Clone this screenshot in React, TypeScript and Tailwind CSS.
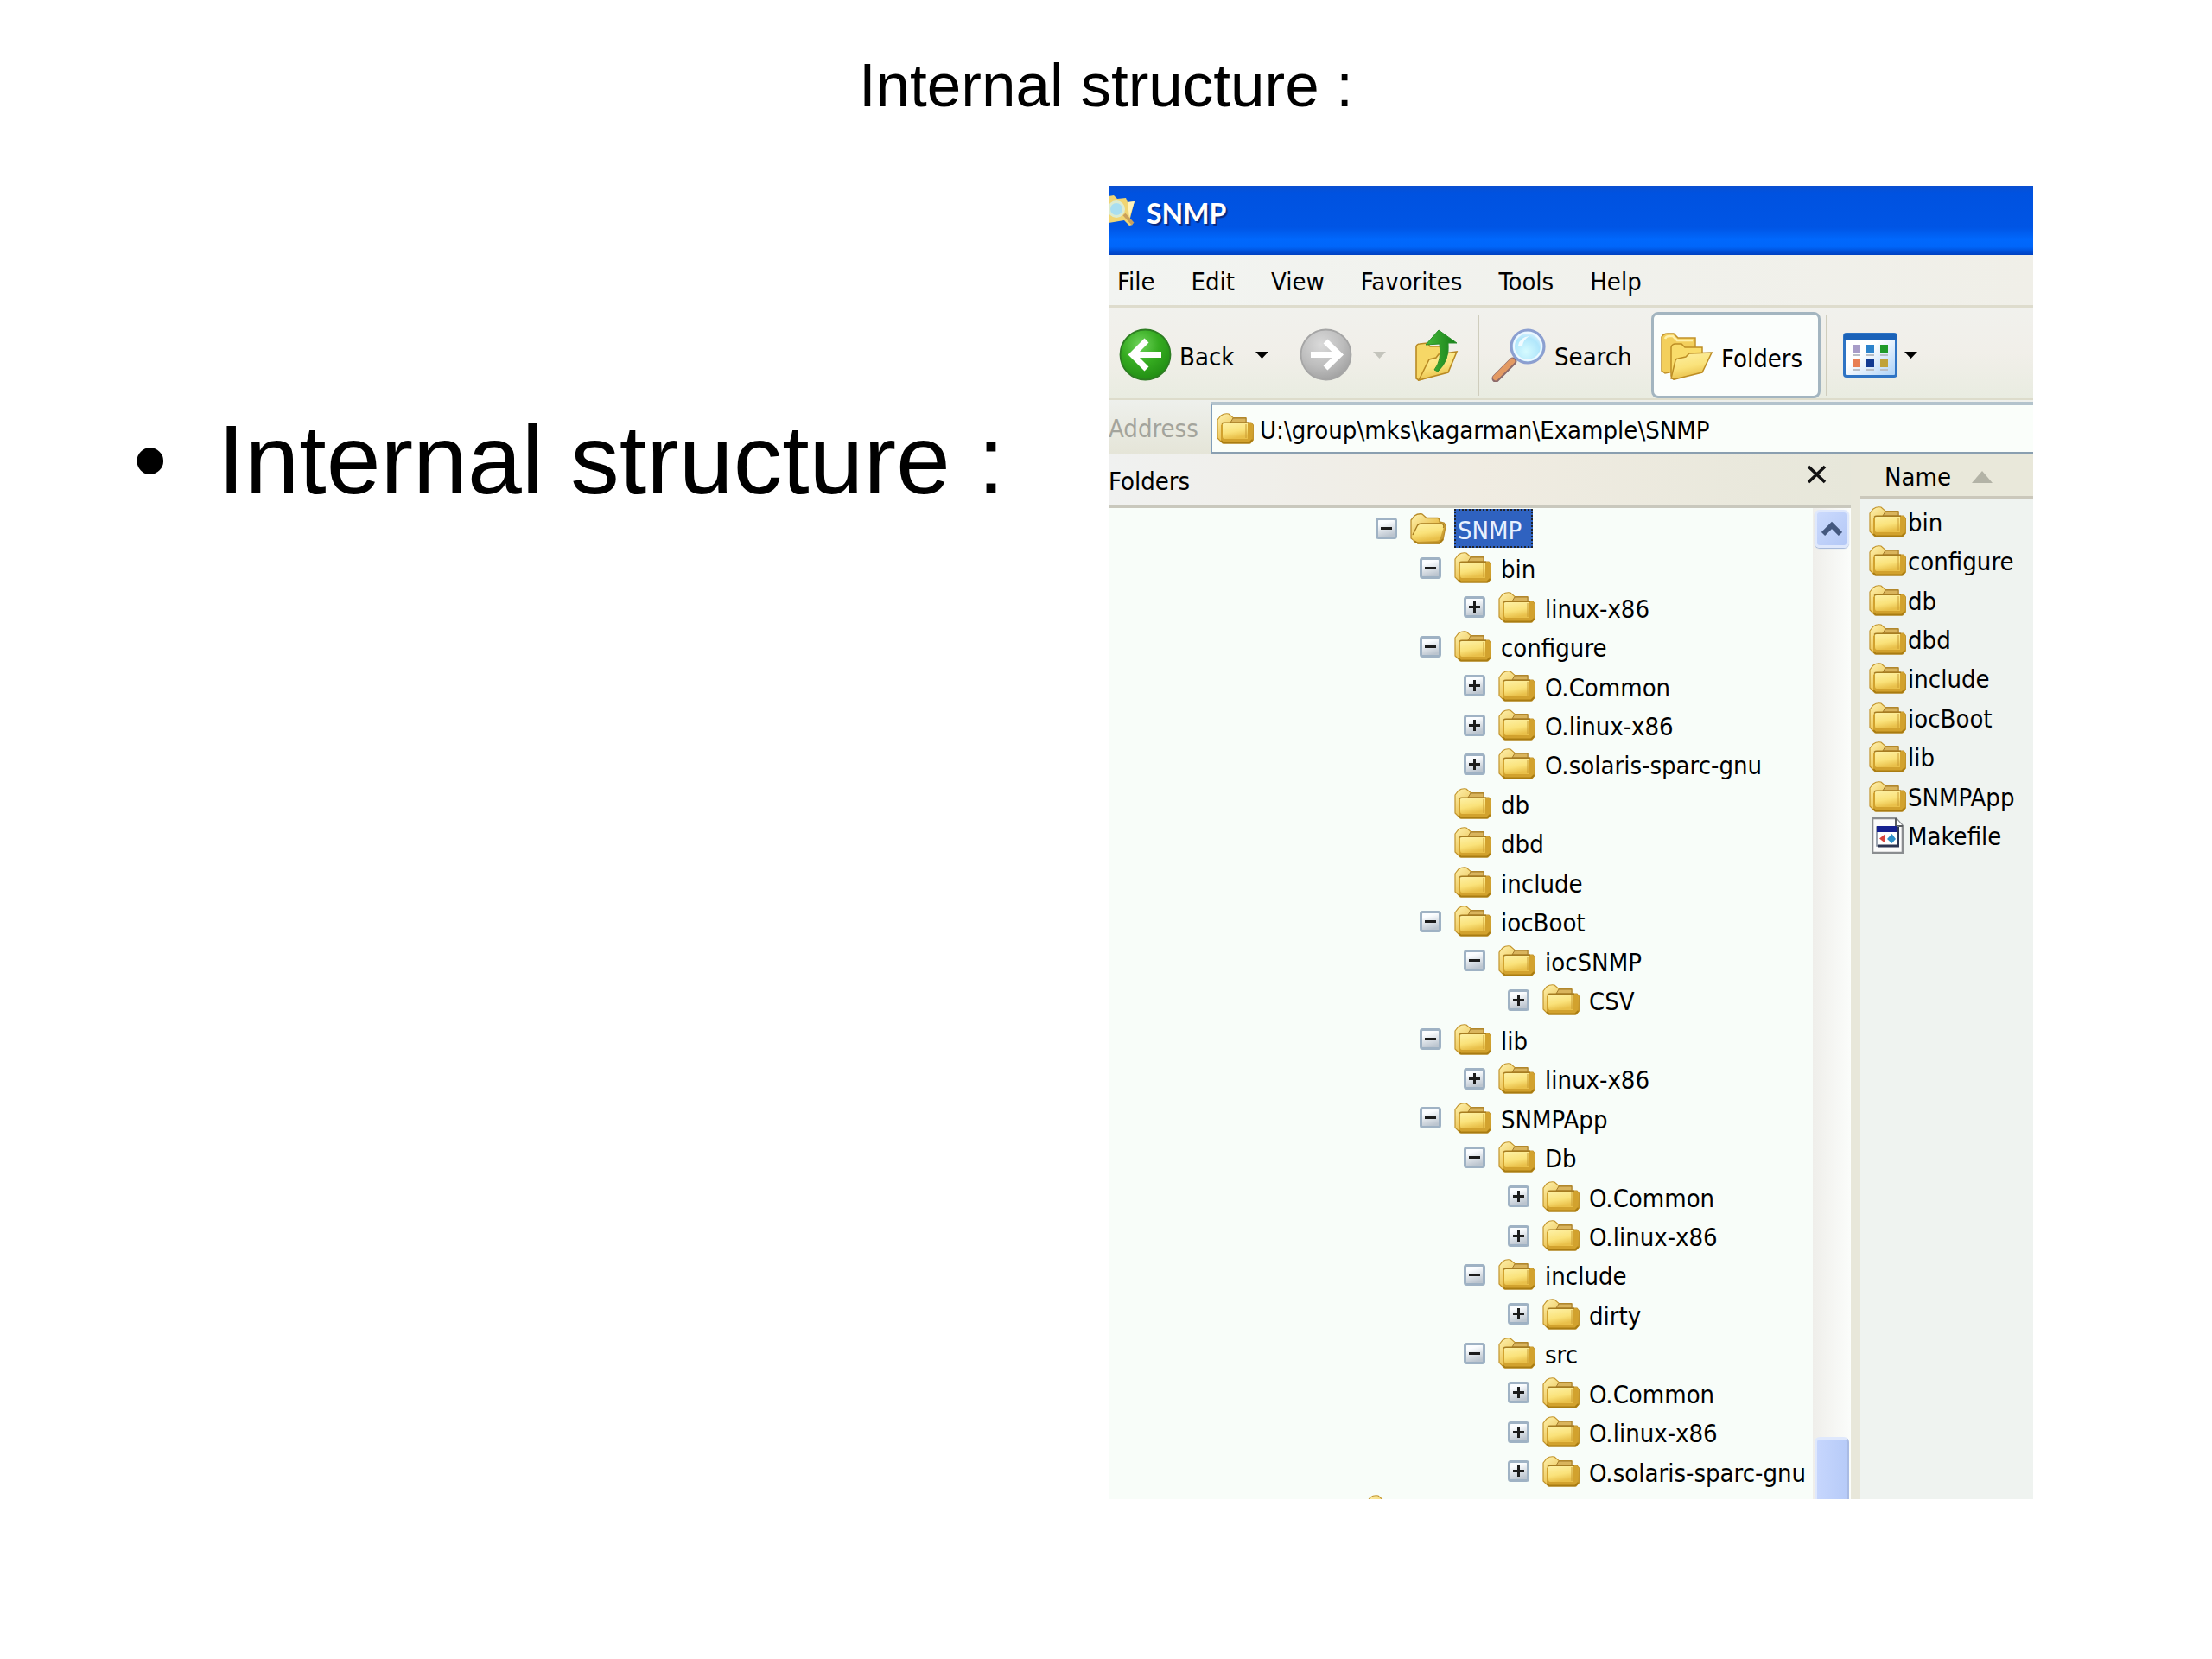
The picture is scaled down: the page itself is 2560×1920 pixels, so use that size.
import React from "react";

type Toggle = "open" | "closed" | null;
type Node = { label: string; level: 0 | 1 | 2 | 3; toggle: Toggle };

const TREE: Node[] = [
  { label: "SNMP", level: 0, toggle: "open" },
  { label: "bin", level: 1, toggle: "open" },
  { label: "linux-x86", level: 2, toggle: "closed" },
  { label: "configure", level: 1, toggle: "open" },
  { label: "O.Common", level: 2, toggle: "closed" },
  { label: "O.linux-x86", level: 2, toggle: "closed" },
  { label: "O.solaris-sparc-gnu", level: 2, toggle: "closed" },
  { label: "db", level: 1, toggle: null },
  { label: "dbd", level: 1, toggle: null },
  { label: "include", level: 1, toggle: null },
  { label: "iocBoot", level: 1, toggle: "open" },
  { label: "iocSNMP", level: 2, toggle: "open" },
  { label: "CSV", level: 3, toggle: "closed" },
  { label: "lib", level: 1, toggle: "open" },
  { label: "linux-x86", level: 2, toggle: "closed" },
  { label: "SNMPApp", level: 1, toggle: "open" },
  { label: "Db", level: 2, toggle: "open" },
  { label: "O.Common", level: 3, toggle: "closed" },
  { label: "O.linux-x86", level: 3, toggle: "closed" },
  { label: "include", level: 2, toggle: "open" },
  { label: "dirty", level: 3, toggle: "closed" },
  { label: "src", level: 2, toggle: "open" },
  { label: "O.Common", level: 3, toggle: "closed" },
  { label: "O.linux-x86", level: 3, toggle: "closed" },
  { label: "O.solaris-sparc-gnu", level: 3, toggle: "closed" },
];

const INDENT = ["pl-[309px]", "pl-[360px]", "pl-[411px]", "pl-[462px]"];

const FILES = ["bin", "configure", "db", "dbd", "include", "iocBoot", "lib", "SNMPApp", "Makefile"];

const MENUS = ["File", "Edit", "View", "Favorites", "Tools", "Help"];

function Gradients() {
  return (
    <svg className="absolute h-0 w-0" aria-hidden="true">
      <defs>
        <linearGradient id="folderFront" x1="0" y1="0" x2="0.3" y2="1">
          <stop offset="0" stopColor="#fdf0a4" />
          <stop offset="0.6" stopColor="#fae27a" />
          <stop offset="1" stopColor="#e9c04a" />
        </linearGradient>
        <linearGradient id="folderBack" x1="0" y1="0" x2="1" y2="1">
          <stop offset="0" stopColor="#fff3b0" />
          <stop offset="0.5" stopColor="#ecc65a" />
          <stop offset="1" stopColor="#b98a1c" />
        </linearGradient>
        <radialGradient id="greenBall" cx="0.4" cy="0.3" r="0.75">
          <stop offset="0" stopColor="#6fd45a" />
          <stop offset="0.5" stopColor="#35ab20" />
          <stop offset="1" stopColor="#1f8a12" />
        </radialGradient>
        <radialGradient id="grayBall" cx="0.4" cy="0.3" r="0.75">
          <stop offset="0" stopColor="#dadada" />
          <stop offset="0.6" stopColor="#bcbcbc" />
          <stop offset="1" stopColor="#9f9f9f" />
        </radialGradient>
        <radialGradient id="lens" cx="0.45" cy="0.65" r="0.6">
          <stop offset="0" stopColor="#d6fbff" />
          <stop offset="0.7" stopColor="#b0e6fb" />
          <stop offset="1" stopColor="#dff3ff" />
        </radialGradient>
        <linearGradient id="greenArrow" x1="0" y1="0" x2="1" y2="0">
          <stop offset="0" stopColor="#46b83a" />
          <stop offset="1" stopColor="#157d16" />
        </linearGradient>
        <linearGradient id="viewPane" x1="0" y1="0" x2="1" y2="1">
          <stop offset="0.4" stopColor="#ffffff" />
          <stop offset="1" stopColor="#a9d0f7" />
        </linearGradient>
        <linearGradient id="expander" x1="0" y1="0" x2="0.3" y2="1">
          <stop offset="0.3" stopColor="#fbfdff" />
          <stop offset="1" stopColor="#bcc5cf" />
        </linearGradient>
      </defs>
    </svg>
  );
}

function Folder() {
  return (
    <svg className="h-9 w-[43px] shrink-0" viewBox="0 0 43 36" aria-hidden="true">
      <path d="M1 8 L5 3 Q9 0 14 1 L19 5.500 H34 V11 H40 L42.500 14 V31 L39 35 H7 L1 29 Z" fill="url(#folderBack)" stroke="#c2942c" strokeWidth="1.200" />
      <path d="M19 6 H34 V11 H16 Z" fill="#d9b45c" stroke="#a37a2a" strokeWidth="1" />
      <path d="M5 14 L8 11 H39 L41.500 14 V30 L38 34 H9 L5 31 Z" fill="#d2a22e" />
      <path d="M7 12 H36 V30 H9 Q7 30 7 27 Z" fill="url(#folderFront)" />
      <path d="M6 12.500 Q7 11.300 9 11.300 H37" fill="none" stroke="#a67c20" strokeWidth="1.400" />
      <path d="M34 13 V29" stroke="#c99b32" strokeWidth="1" />
      <path d="M5 32 L8 34.500 H38 L41.500 31" fill="none" stroke="#a97c12" strokeWidth="1.800" />
    </svg>
  );
}

function OpenFolder() {
  return (
    <svg className="h-9 w-[43px] shrink-0" viewBox="0 0 43 36" aria-hidden="true">
      <path d="M1 8 L5 3 Q9 0 14 1 L19 5.500 H32 Q34 6 34 10 L39 11 Q42 14 40.500 18 L38 31 L34 35 H9 L1 29 Z" fill="url(#folderBack)" stroke="#b98c2a" strokeWidth="1.300" />
      <path d="M2 28 L8 14 Q10 12 13 12 H36 Q40 13 38.500 17 L34.500 30 Q33 32 30 32 H8 Q3 32 2 28 Z" fill="url(#folderFront)" />
      <path d="M3 25 L8.500 14 Q10 12 13 12 H36 Q40 13 38.500 17" fill="none" stroke="#a67c20" strokeWidth="1.400" />
      <path d="M4 32 L9 34.500 H34 L38 30" fill="none" stroke="#a97c12" strokeWidth="1.800" />
    </svg>
  );
}

function MakefileIcon() {
  return (
    <svg className="mx-[3px] h-[42px] w-[37px] shrink-0" viewBox="0 0 37 42" aria-hidden="true">
      <path d="M1 1 H28 L36 10 V41 H1 Z" fill="#fbfbfb" stroke="#8a8d90" strokeWidth="2.600" />
      <path d="M28 1 V10 H36" fill="#ffffff" stroke="#5a5d60" strokeWidth="2" />
      <rect x="6" y="11" width="25" height="22" fill="#fff" stroke="#7d8898" strokeWidth="1.500" />
      <rect x="6" y="10" width="24" height="7" fill="#15208f" />
      <path d="M30.500 11 V33 H7" fill="none" stroke="#2c3552" strokeWidth="3" />
      <path d="M16 19 V30 L9 24.500 Z" fill="#d8433c" />
      <path d="M18 25 L23.500 19 L28 25 L23.500 30 Z" fill="#2b8fc9" />
    </svg>
  );
}

function Expander({ open, label }: { open: boolean; label: string }) {
  return (
    <button type="button" aria-expanded={open} aria-label={`Toggle ${label}`} className="h-[25px] w-[25px] shrink-0">
      <svg viewBox="0 0 25 25" className="h-full w-full" aria-hidden="true">
        <rect x="1.500" y="1.500" width="22" height="22" rx="2" fill="url(#expander)" stroke="#9fb2c4" strokeWidth="3" />
        <path d="M6 12.500 H19" stroke="#1c1c1c" strokeWidth="3" />
        {!open && <path d="M12.500 6 V19" stroke="#1c1c1c" strokeWidth="3" />}
      </svg>
    </button>
  );
}

function Caret({ color }: { color: string }) {
  return (
    <svg className="h-2 w-[15px] shrink-0" viewBox="0 0 15 8" aria-hidden="true">
      <path d="M0 0 H15 L7.500 8 Z" fill={color} />
    </svg>
  );
}

function Ball({ forward }: { forward?: boolean }) {
  return (
    <svg className="h-[61px] w-[61px] shrink-0" viewBox="0 0 61 61" aria-hidden="true">
      <circle cx="30.500" cy="30.500" r="29" fill={forward ? "url(#grayBall)" : "url(#greenBall)"} stroke={forward ? "#a5a5a5" : "#2d7d22"} strokeWidth="1.800" />
      {forward ? (
        <path d="M13 30.500 H44 M30 15 L46 30.500 L30 46" fill="none" stroke="#fff" strokeWidth="7" />
      ) : (
        <path d="M49 30.500 H17 M32 14 L15.500 30.500 L32 47" fill="none" stroke="#fff" strokeWidth="7" />
      )}
    </svg>
  );
}

function UpFolder() {
  return (
    <svg className="h-[60px] w-[50px] shrink-0" viewBox="0 0 50 60" aria-hidden="true">
      <path d="M1 20 Q2 17 5 17 L14 16 L17 20 H34 V50 L4 59 L1 57 Z" fill="#f6d766" stroke="#b98a24" strokeWidth="1.600" />
      <path d="M4 59 L16 35 L24 33 L27 29 L48 26 L38 50 Z" fill="url(#folderFront)" stroke="#b98a24" strokeWidth="1.600" />
      <path d="M12 18 L27 1 L48 16 L38 16 Q40 36 26 49 L22 47 Q31 36 28 17 Z" fill="url(#greenArrow)" stroke="#2b8f2a" strokeWidth="1" />
    </svg>
  );
}

function SearchIcon() {
  return (
    <svg className="h-[62px] w-[63px] shrink-0" viewBox="0 0 63 62" aria-hidden="true">
      <path d="M25 38 L5 58" stroke="#8d6a6a" strokeWidth="9" strokeLinecap="round" />
      <path d="M24 38 L5 57" stroke="#e39a63" strokeWidth="6.500" strokeLinecap="round" />
      <circle cx="42" cy="21" r="19" fill="url(#lens)" stroke="#8c9fd0" strokeWidth="3.200" />
      <circle cx="42" cy="21" r="16" fill="none" stroke="#eef8ff" strokeWidth="2" />
      <path d="M31 20 Q33 10 44 9 Q37 13 36 20 Z" fill="#fff" opacity="0.800" />
    </svg>
  );
}

function FoldersIcon() {
  return (
    <svg className="h-[55px] w-[60px] shrink-0" viewBox="0 0 60 55" aria-hidden="true">
      <path d="M1 5 Q3 1 8 1 L15 1 L20 6 H40 V40 L5 47 L1 44 Z" fill="#f3cf5c" stroke="#c2922a" strokeWidth="1.500" />
      <path d="M5 7 Q6 4 10 4 L14 4 L19 9 H37" fill="none" stroke="#fff0a8" strokeWidth="2.500" />
      <path d="M12 17 Q13 13 17 13 H24 L28 17 H48 V42 L15 54 L12 50 Z" fill="#f9dc6a" stroke="#bd8d24" strokeWidth="1.500" />
      <path d="M12 53 L17 32 Q18 30 20 30 L29 28 L33 24 L59 23 L48 46 L16 54 Z" fill="url(#folderFront)" stroke="#bd8d24" strokeWidth="1.500" />
    </svg>
  );
}

function ViewsIcon() {
  const cells = [
    ["#a89cc8", 11, 14],
    ["#2d83cc", 27, 14],
    ["#1e9a2a", 43, 14],
    ["#e87f54", 11, 31],
    ["#123a92", 27, 31],
    ["#c0a23a", 43, 31],
  ] as const;
  return (
    <svg className="h-[52px] w-[63px] shrink-0" viewBox="0 0 63 52" aria-hidden="true">
      <rect x="1.500" y="1.500" width="60" height="49" rx="2.500" fill="url(#viewPane)" stroke="#2f74c4" strokeWidth="3" />
      <rect x="1" y="1" width="61" height="8" rx="2" fill="#1b62b8" />
      {cells.map(([fill, x, y]) => (
        <g key={`${x}-${y}`}>
          <rect x={x} y={y} width="9" height="9" fill={fill} />
          <rect x={x} y={y + 11} width="9" height="2" fill="#b9bec6" />
        </g>
      ))}
    </svg>
  );
}

function TitleIcon() {
  return (
    <svg className="h-9 w-[31px] shrink-0" viewBox="0 0 31 36" aria-hidden="true">
      <path d="M0 2 L6 1 L10 5 L20 4 L22 9 L30 8 L24 31 L28 35 L24 36 L18 30 L0 33 Z" fill="#f0d573" />
      <path d="M18 23 L28 34" stroke="#c9a05b" strokeWidth="4" />
      <path d="M22 9 L30 8 L24 27 Z" fill="#fff3bd" />
      <circle cx="9" cy="17" r="8.500" fill="#a9def0" stroke="#dcebd0" strokeWidth="3" />
    </svg>
  );
}

function Separator() {
  return <div className="h-[94px] w-0.5 shrink-0 bg-[#cfcdbd]" />;
}

export default function App() {
  return (
    <div className="relative min-h-screen overflow-hidden bg-white font-['Liberation_Sans',Arial,sans-serif] text-black">
      <Gradients />
      <header className="flex h-[215px] justify-center pt-[63px]">
        <h1 className="text-[71px] leading-[72px]">Internal structure :</h1>
      </header>

      <main className="grid grid-cols-[1283fr_1070fr_207fr] items-start">
        <ul className="pt-[260px] pl-[154px] text-[113px] leading-[114px]">
          <li className="flex whitespace-nowrap">
            <span className="w-[98px] shrink-0" aria-hidden="true">•</span>
            <span>Internal structure :</span>
          </li>
        </ul>

        <section className="min-w-0 overflow-hidden bg-[#f0f1ee] font-['DejaVu_Sans_Condensed','DejaVu_Sans',sans-serif] text-[29px] leading-9">
          <div className="flex h-20 items-start gap-[13px] pt-[10px] [background-image:linear-gradient(to_bottom,#0a4fd0_0%,#0052e0_10%,#0055e5_60%,#0068fd_78%,#0066fa_88%,#0040c0_100%)]">
            <TitleIcon />
            <h2 className="pt-0.5 font-['Lato',sans-serif] text-[32px] leading-10 font-bold text-white [text-shadow:2px_2px_1px_#0a2a80]">SNMP</h2>
          </div>

          <nav className="flex h-[61px] items-center gap-[42px] border-b-3 border-[#dedccd] bg-linear-to-r from-[#f2f4f1] to-[#f0efe8] pt-1 pl-[10px]">
            {MENUS.map((m) => (
              <button key={m} type="button">{m}</button>
            ))}
          </nav>

          <div className="flex h-[107px] items-center border-b-2 border-[#dddccb] bg-linear-to-b from-[#f1f1ed] via-[#f1efe9] to-[#e9ece1] pt-1 pl-3">
            <button type="button" className="flex items-center gap-[9px]">
              <Ball />
              <span className="w-[79px] pt-1 text-left">Back</span>
              <Caret color="#000" />
            </button>
            <button type="button" aria-label="Forward" className="ml-9 flex items-center gap-6">
              <Ball forward />
              <Caret color="#c4c4bc" />
            </button>
            <button type="button" aria-label="Up" className="mr-[22px] ml-[34px]">
              <UpFolder />
            </button>
            <Separator />
            <button type="button" className="ml-[14px] flex items-center gap-[10px]">
              <SearchIcon />
              <span className="w-[112px] pt-1 text-left">Search</span>
            </button>
            <button type="button" className="mr-1.5 flex h-[100px] w-[196px] shrink-0 items-center gap-[10px] rounded-lg border-3 border-[#a3b5c0] bg-[#fbfefc] pt-1 pl-2">
              <FoldersIcon />
              <span className="pt-1">Folders</span>
            </button>
            <Separator />
            <button type="button" aria-label="Views" className="ml-[18px] flex items-center gap-2">
              <ViewsIcon />
              <Caret color="#000" />
            </button>
          </div>

          <div className="flex h-[62px] items-stretch bg-linear-to-b from-[#eef0ec] to-[#e5e5d8]">
            <label htmlFor="address" className="flex w-[118px] shrink-0 items-center pt-1 text-[#a3a49c]">Address</label>
            <div className="mt-0.5 flex min-w-0 flex-1 items-center gap-[7px] border-t-4 border-b-2 border-l-2 border-t-[#b3c3cc] border-b-[#8a9fb0] border-l-[#7f9db9] bg-[#fafefa] pl-[5px]">
              <Folder />
              <input id="address" className="min-w-0 flex-1 bg-transparent pt-1 outline-none" defaultValue="U:\group\mks\kagarman\Example\SNMP" />
            </div>
          </div>

          <div className="flex h-[1210px] bg-[#e8e7da]">
            <div className="mr-[11px] flex min-w-0 flex-1 flex-col">
              <div className="flex h-[63px] shrink-0 items-center justify-between border-b-4 border-[#c9c8bd] bg-linear-to-r from-[#f0f1f0] via-[#f0ece2] to-[#e7e7da] pr-7">
                <span className="pt-1">Folders</span>
                <button type="button" aria-label="Close folders" className="pb-3">
                  <svg className="h-[22px] w-[23px]" viewBox="0 0 23 22" aria-hidden="true">
                    <path d="M2 2 L21 20 M21 2 L2 20" stroke="#111" strokeWidth="3.600" />
                  </svg>
                </button>
              </div>
              <div className="flex min-h-0 flex-1 bg-[#f8fdf9]">
                <div className="min-w-0 flex-1 overflow-hidden pt-px">
                  <ul className="grid h-[1182px] auto-rows-fr">
                    {TREE.map((n, i) => (
                      <li key={i} className={`flex items-center whitespace-nowrap ${INDENT[n.level]}`}>
                        {n.toggle ? <Expander open={n.toggle === "open"} label={n.label} /> : <span className="w-[25px] shrink-0" />}
                        <span className="mr-2 ml-[15px]">{i === 0 ? <OpenFolder /> : <Folder />}</span>
                        {i === 0 ? (
                          <span className="flex h-full w-[91px] items-center border-2 border-dotted border-[#20242c] bg-[#2f62c0] pt-1 pl-0.5 text-[#e8f0ff]">{n.label}</span>
                        ) : (
                          <span className="pt-1 pl-[3px]">{n.label}</span>
                        )}
                      </li>
                    ))}
                    <li className="flex items-center pl-[298px]">
                      <Folder />
                    </li>
                  </ul>
                </div>
                <div className="flex w-11 shrink-0 flex-col items-end justify-between bg-linear-to-r from-[#efeeea] to-[#fbfdfb] pr-0.5">
                  <button type="button" aria-label="Scroll up" className="mt-0.5 flex h-11 w-10 items-center justify-center rounded-md border-3 border-[#dfe8fc] bg-linear-to-br from-[#cbdafd] to-[#b4c8f6] shadow-[0_1px_1px_#9fb3d8]">
                    <svg className="h-[18px] w-6" viewBox="0 0 24 18" aria-hidden="true">
                      <path d="M2 15 L12 5 L22 15" fill="none" stroke="#44587f" strokeWidth="6" />
                    </svg>
                  </button>
                  <div className="h-[72px] w-10 rounded-t-md border-3 border-b-0 border-[#dfe8fc] border-r-[#a9bbe4] bg-linear-to-r from-[#c6d6fd] to-[#b7cbf8]" />
                </div>
              </div>
            </div>

            <div className="w-[200px] shrink-0 bg-[#eff3f0]">
              <button type="button" className="flex h-[53px] w-full items-center gap-6 border-b-4 border-[#cbc8bb] bg-[#e9e8da] pt-1 pl-7">
                <span>Name</span>
                <svg className="h-3.5 w-6" viewBox="0 0 24 14" aria-hidden="true">
                  <path d="M12 0 L24 14 H0 Z" fill="#b3b3a6" />
                </svg>
              </button>
              <ul className="grid h-[412px] auto-rows-fr pt-[3px] pl-[10px]">
                {FILES.map((f) => (
                  <li key={f} className="flex items-center gap-0.5 whitespace-nowrap">
                    {f === "Makefile" ? <MakefileIcon /> : <Folder />}
                    <span className="pt-0.5">{f}</span>
                  </li>
                ))}
              </ul>
            </div>
          </div>
        </section>
      </main>
    </div>
  );
}
